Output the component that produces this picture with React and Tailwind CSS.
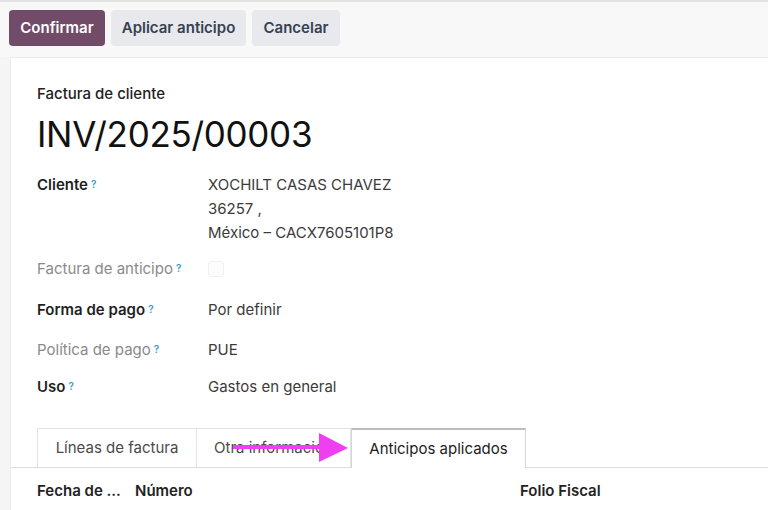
import React from "react";

const Q = () => (
  <sup className="ml-[3px] text-[10px] font-semibold text-[#3d9bc9] relative top-[-2px]">?</sup>
);

function Row({ label, muted, bold, children, h }) {
  return (
    <div className={`flex ${h}`}>
      <div
        className={`w-[171px] shrink-0 ${muted ? "text-[#8a8a8a]" : "text-[#1f1f1f]"} ${bold ? "font-semibold" : ""}`}
      >
        {label}
        <Q />
      </div>
      <div className="text-[#3b3b3b]">{children}</div>
    </div>
  );
}

export default function App() {
  return (
    <div
      className="w-[768px] h-[510px] overflow-hidden bg-[#f5f5f6] text-[15px]"
      style={{ fontFamily: "Inter, 'Liberation Sans', sans-serif" }}
    >
      <div className="h-[2px] bg-[#e2e2e4]" />
      <div className="flex gap-[6px] pl-[9px] pt-[8px] h-[55px] bg-[#f8f8f9]">
        <button className="h-[36px] w-[96px] pt-[1px] rounded-[4px] bg-[#714b67] text-white font-semibold text-[15px]">
          Confirmar
        </button>
        <button className="h-[36px] w-[135px] pt-[1px] rounded-[4px] bg-[#e7e9ec] text-[#374151] font-semibold text-[15px]">
          Aplicar anticipo
        </button>
        <button className="h-[36px] w-[88px] pt-[1px] rounded-[4px] bg-[#e7e9ec] text-[#374151] font-semibold text-[15px]">
          Cancelar
        </button>
      </div>
      <div className="ml-[10px] bg-white h-[460px] border-l border-t border-[#ececee]">
        <div className="pl-[26px] pt-[26px]">
          <div className="text-[#222] font-medium leading-[20px]">Factura de cliente</div>
          <div className="text-[35px] leading-[44px] text-[#111] mt-[8px] tracking-[-0.3px]">INV/2025/00003</div>
          <div className="mt-[17px] leading-[24px]">
            <Row label="Cliente" bold h="h-[84px]">
              <div>XOCHILT CASAS CHAVEZ</div>
              <div>36257 ,</div>
              <div>México – CACX7605101P8</div>
            </Row>
            <Row label="Factura de anticipo" muted h="h-[41px]">
              <div className="w-[16px] h-[16px] mt-[4px] border border-[#f0f0f0] rounded-[3px] bg-[#fcfcfc]" />
            </Row>
            <Row label="Forma de pago" bold h="h-[40px]">Por definir</Row>
            <Row label="Política de pago" muted h="h-[37px]">PUE</Row>
            <Row label="Uso" bold h="h-[53px]">Gastos en general</Row>
          </div>
        </div>
        <div className="relative border-b border-[#dcdcdf] flex pl-[26px] h-[40px] items-end">
          <div className="h-[39px] w-[160px] border border-b-0 border-[#e4e4e6] flex items-center justify-center text-[#4a4a4a]">
            Líneas de factura
          </div>
          <div className="h-[39px] w-[154px] border-t border-r border-[#e4e4e6] flex items-center pl-[17px] text-[#4a4a4a] overflow-hidden whitespace-nowrap">
            Otra información
          </div>
          <div className="h-[40px] w-[175px] border border-b-0 border-[#d6d6d8] border-t-[#bdbdc0] border-t-2 bg-white flex items-center justify-center text-[#222] mb-[-1px]">
            Anticipos aplicados
          </div>
          <svg className="absolute left-[222px] top-[3px]" width="118" height="32" viewBox="0 0 118 32">
            <line x1="0" y1="16" x2="92" y2="16" stroke="#ee3ff0" strokeWidth="4" />
            <polygon points="86,2 115,17 86,31" fill="#ee3ff0" />
          </svg>
        </div>
        <div className="flex pl-[26px] pt-[12px] font-semibold text-[#222]">
          <div className="w-[98px] whitespace-nowrap">Fecha de ...</div>
          <div className="w-[385px]">Número</div>
          <div>Folio Fiscal</div>
        </div>
      </div>
    </div>
  );
}
